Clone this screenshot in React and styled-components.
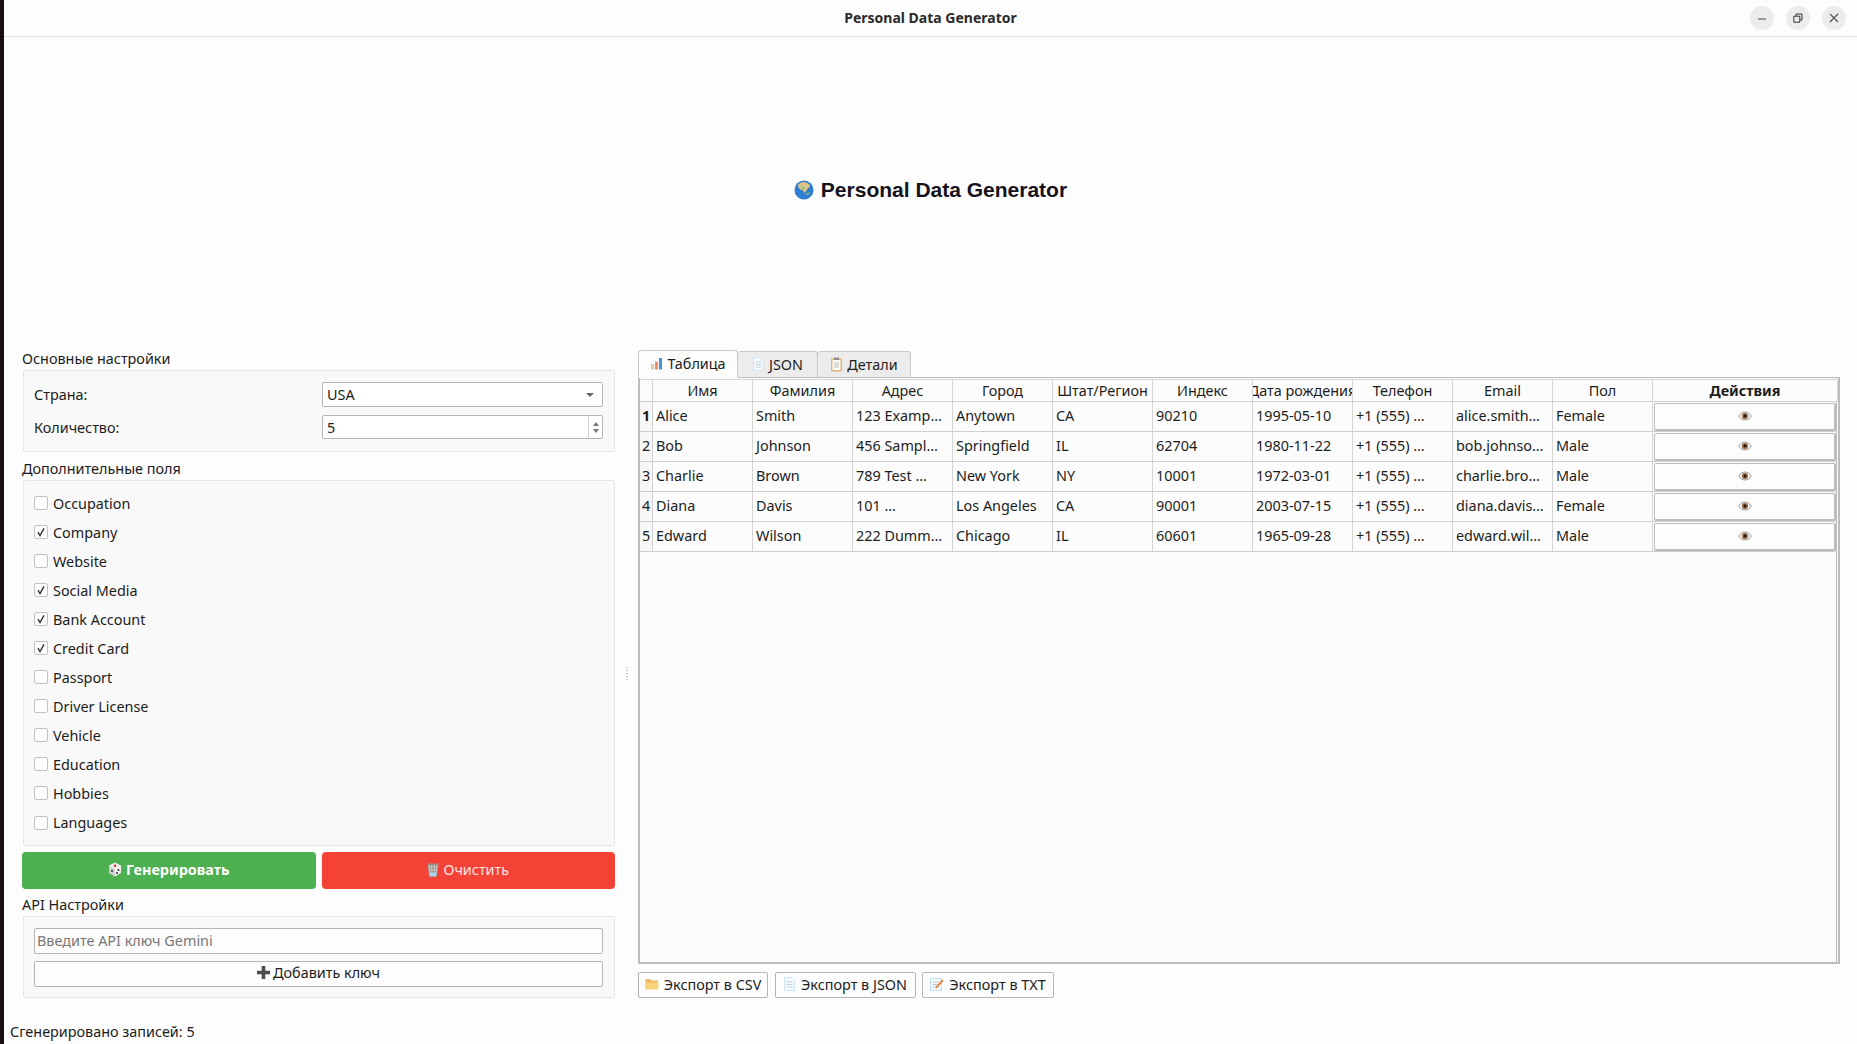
import React from 'react'
import styled, { createGlobalStyle } from 'styled-components'

const GlobalStyle = createGlobalStyle`
html, body { margin: 0; padding: 0; height: 100%; background: #fdfdfd; }
* { box-sizing: border-box; }
body { font-family: "Noto Sans", "Liberation Sans", sans-serif; font-size: 14.4px; color: #1c1c1c; overflow: hidden; }
`

const Window = styled.div`
width: 1857px;
height: 1044px;
display: flex;
flex-direction: column;
border-left: 4px solid #170f14;
background: #fdfdfd;
`
const TitleBar = styled.div`
height: 37px;
flex: none;
display: grid;
grid-template-columns: 1fr auto 1fr;
align-items: center;
background: #fdfdfd;
border-bottom: 1px solid #e2e2e2;
`
const WindowTitle = styled.div`
font-size: 14px;
font-weight: 700;
color: #2a2a2a;
padding-bottom: 2px;
`
const WindowControls = styled.div`
display: flex;
justify-content: flex-end;
gap: 12px;
padding-right: 11px;
`
const ControlButton = styled.div`
width: 24px;
height: 24px;
border-radius: 50%;
background: #ececec;
display: flex;
align-items: center;
justify-content: center;
color: #555;
`
const Heading = styled.h1`
height: 313px;
flex: none;
margin: 0;
display: flex;
align-items: center;
justify-content: center;
gap: 7px;
font-family: "Liberation Sans", Arial, sans-serif;
font-size: 21px;
font-weight: 700;
color: #15121c;
padding-bottom: 8px;
`
const Main = styled.div`
display: flex;
flex: none;
padding-left: 18px;
`
const LeftPanel = styled.div`
width: 593px;
flex: none;
display: flex;
flex-direction: column;
`
const Splitter = styled.div`
width: 23px;
flex: none;
display: flex;
align-items: center;
justify-content: center;
`
const SplitterDots = styled.div`
width: 2px;
height: 16px;
background-image: radial-gradient(circle, #c8c8c8 1px, transparent 1px);
background-size: 2px 3px;
`
const GroupTitle = styled.div`
height: 18px;
line-height: 18px;
margin-top: ${p => p.$top || 0}px;
margin-bottom: 2px;
white-space: nowrap;
`
const GroupBox = styled.div`
margin-left: 1px;
border: 1px solid #e6e6e6;
border-radius: 2px;
background: #f9f9f9;
padding: ${p => p.$padding};
display: flex;
flex-direction: column;
gap: ${p => p.$gap || 0}px;
height: ${p => p.$height}px;
`
const FormRow = styled.div`
display: flex;
align-items: center;
justify-content: space-between;
height: ${p => p.$height}px;
`
const FieldFrame = styled.div`
width: 281px;
height: 100%;
border: 1px solid #b4b4b4;
border-radius: 2px;
background: #fff;
display: flex;
align-items: center;
padding-left: 4px;
`
const ComboArrow = styled.span`
margin-left: auto;
margin-right: 8px;
width: 0;
height: 0;
border-left: 4px solid transparent;
border-right: 4px solid transparent;
border-top: 4px solid #666;
`
const SpinButtons = styled.div`
margin-left: auto;
width: 14px;
height: 100%;
border-left: 1px solid #cfcfcf;
display: flex;
flex-direction: column;
align-items: center;
justify-content: center;
gap: 3px;
`
const SpinUp = styled.span`
width: 0;
height: 0;
border-left: 3.5px solid transparent;
border-right: 3.5px solid transparent;
border-bottom: 4px solid #777;
`
const SpinDown = styled.span`
width: 0;
height: 0;
border-left: 3.5px solid transparent;
border-right: 3.5px solid transparent;
border-top: 4px solid #777;
`
const CheckRow = styled.label`
height: 29.05px;
flex: none;
display: flex;
align-items: center;
gap: 5px;
`
const CheckBox = styled.span`
width: 14px;
height: 14px;
border: 1px solid #c2c2c2;
border-radius: 2px;
background: #fdfdfd;
display: flex;
align-items: center;
justify-content: center;
`
const ActionRow = styled.div`
display: flex;
gap: 6px;
margin-top: 6px;
height: 37px;
`
const ActionButton = styled.div`
flex: 1;
border-radius: 4px;
background: ${p => p.$bg};
color: ${p => p.$color};
font-weight: ${p => p.$bold ? 700 : 400};
padding-bottom: 2px;
display: flex;
align-items: center;
justify-content: center;
gap: 4px;
`
const KeyInput = styled.input`
height: 26px;
flex: none;
width: 100%;
border: 1px solid #b4b4b4;
border-radius: 2px;
background: #fdfdfd;
padding: 0 2px 2px;
font-family: inherit;
font-size: 14.4px;
&::placeholder { color: #777; opacity: 1; }
`
const PlainButton = styled.div`
height: 26px;
flex: none;
border: 1px solid #b4b4b4;
border-radius: 2px;
background: #fdfdfd;
padding-bottom: 2px;
display: flex;
align-items: center;
justify-content: center;
gap: 3px;
white-space: nowrap;
`
const RightPanel = styled.div`
width: 1202px;
flex: none;
display: flex;
flex-direction: column;
margin-top: -1px;
`
const TabBar = styled.div`
height: 28px;
flex: none;
display: flex;
align-items: flex-end;
`
const Tab = styled.div`
height: ${p => p.$active ? 28 : 26}px;
width: ${p => p.$width}px;
border: 1px solid #c8c8c8;
border-bottom: ${p => p.$active ? '1px solid #fdfdfd' : '0'};
border-left: ${p => p.$active ? '1px solid #c8c8c8' : '0'};
border-radius: 3px 3px 0 0;
background: ${p => p.$active ? '#fdfdfd' : '#ececec'};
padding-bottom: 1px;
display: flex;
align-items: center;
justify-content: center;
gap: 4px;
margin-bottom: ${p => p.$active ? -1 : 0}px;
position: relative;
`
const TabPane = styled.div`
height: 587px;
flex: none;
border: 2px solid #bdbdbd;
border-top-width: 1px;
background: #fbfbfb;
padding: 1px 1px 0 0;
`
const TableFrame = styled.div`
height: 100%;
border-top: 1px solid #d6d6d6;
border-right: 1px solid #bdbdbd;
background: #fcfcfc;
`
const GridRow = styled.div`
display: grid;
grid-template-columns: 13px repeat(10, 100px) 185px;
height: ${p => p.$height}px;
border-bottom: 1px solid #cfcfcf;
`
const HeaderCell = styled.div`
display: flex;
align-items: center;
justify-content: center;
overflow: hidden;
white-space: nowrap;
font-weight: ${p => p.$bold ? 700 : 400};
border-right: 1px solid #d6d6d6;
background: #fcfcfc;
`
const RowHead = styled.div`
display: flex;
align-items: center;
justify-content: center;
padding-bottom: 2px;
font-weight: ${p => p.$bold ? 700 : 400};
border-right: 1px solid #cfcfcf;
background: #f7f7f7;
`
const Cell = styled.div`
display: flex;
align-items: center;
padding: 0 0 2px 3px;
overflow: hidden;
white-space: nowrap;
border-right: 1px solid #d6d6d6;
`
const ActionCell = styled.div`
display: flex;
padding: 1px 2px 0 1px;
`
const ViewButton = styled.div`
flex: 1;
border: 1px solid #bdbdbd;
border-bottom-width: 2px;
border-right-width: 2px;
border-radius: 2px;
background: #fdfdfd;
padding-bottom: 2px;
display: flex;
align-items: center;
justify-content: center;
`
const ExportRow = styled.div`
display: flex;
gap: 6.5px;
margin-top: 8px;
`
const ExportButton = styled.div`
height: 26px;
width: ${p => p.$width}px;
border: 1px solid #b4b4b4;
border-radius: 2px;
background: #fdfdfd;
padding-bottom: 2px;
display: flex;
align-items: center;
justify-content: center;
gap: 5px;
white-space: nowrap;
`
const StatusBar = styled.div`
margin-top: 24px;
padding-left: 6px;
height: 20px;
line-height: 20px;
`

const GlobeIcon = () => (
  <svg width="20" height="20" viewBox="0 0 20 20">
    <circle cx="10" cy="10" r="9.5" fill="#2f7fd0" />
    <path d="M4 5c2-2.5 5-3.500 8-2.500 2 .6 3.600 2 4 3.600-.4 1.800-2 2-3 3.400-.5 1.500-1.500 3-2.600 3.300-1-.6-1-2.300-2.400-2.800C6.500 10 4 8 4 5z" fill="#d9c48a" />
    <path d="M8 7c1-.5 2.500-.3 3 .6-.2 1-1.300 1.800-2.300 1.500C8 8.800 7.800 8 8 7z" fill="#8db56b" />
    <path d="M12.500 13c1-.6 2.400-.8 3.300-.4-.4 1.400-1.500 2.400-2.800 2.600-.6-.6-.8-1.400-.5-2.200z" fill="#8db56b" />
  </svg>
)
const ChartIcon = () => (
  <svg width="13" height="13" viewBox="0 0 13 13">
    <rect x="1" y="7" width="3" height="5.500" fill="#e6c9a8" />
    <rect x="5" y="4.500" width="3" height="8" fill="#ef8f6a" />
    <rect x="9" y="1" width="3" height="11.500" fill="#4a90d9" />
  </svg>
)
const DocIcon = () => (
  <svg width="13" height="14" viewBox="0 0 13 14">
    <path d="M1.500.5h7l3 3v10h-10z" fill="#f3f9fd" stroke="#cde4f2" />
    <path d="M3.500 5h6M3.500 7.500h6M3.500 10h6" stroke="#c5d3dc" />
  </svg>
)
const ClipboardIcon = () => (
  <svg width="13" height="15" viewBox="0 0 13 15">
    <rect x="1" y="1.500" width="11" height="13" rx="1" fill="#e8b27a" />
    <rect x="2.500" y="3" width="8" height="10" fill="#fdfdfd" />
    <rect x="4" y="0.500" width="5" height="2.500" fill="#8d8d8d" />
    <path d="M4 6h5M4 8h5M4 10h5" stroke="#bbb" />
  </svg>
)
const DiceIcon = () => (
  <svg width="14" height="15" viewBox="0 0 14 15">
    <path d="M7 .5l6 3v7.500l-6 3.500-6-3.500V3.500z" fill="#f1f1f1" />
    <path d="M7 7.500v7l-6-3.500V3.500z" fill="#cfcfcf" />
    <circle cx="7" cy="3.700" r="1.300" fill="#d8342c" />
    <circle cx="4" cy="9" r="1" fill="#333" />
    <circle cx="10.500" cy="8" r="1" fill="#333" />
    <circle cx="9" cy="11" r="1" fill="#333" />
  </svg>
)
const TrashIcon = () => (
  <svg width="12" height="15" viewBox="0 0 12 15">
    <path d="M.5 1.500h11L10 14.500H2z" fill="#9a8f88" />
    <path d="M2 3l1 9M4.500 3l.4 9M7.500 3l-.4 9M10 3l-1 9M1 5h10M1.500 8h9" stroke="#d7d4d0" strokeWidth=".7" />
    <path d="M2.400 10.500h7.200l-.4 4H2.800z" fill="#a9d3ee" />
  </svg>
)
const PlusIcon = () => (
  <svg width="13" height="13" viewBox="0 0 13 13">
    <path d="M4.700 0h3.600v4.700H13v3.600H8.300V13H4.700V8.300H0V4.700h4.700z" fill="#4d4d4d" />
  </svg>
)
const FolderIcon = () => (
  <svg width="14" height="12" viewBox="0 0 14 12">
    <path d="M.5 2.500c0-.8.5-1.500 1.300-1.500H5l1.200 1.500H13v8.500H.5z" fill="#e8b860" />
    <path d="M.5 4.500h13v7H.5z" fill="#f6d27e" />
  </svg>
)
const MemoIcon = () => (
  <svg width="14" height="14" viewBox="0 0 14 14">
    <rect x="0.500" y="1.500" width="11" height="12" fill="#f3f9fd" stroke="#bfe0f2" />
    <path d="M2.500 5h6M2.500 7.500h5M2.500 10h4" stroke="#b9c8d2" />
    <path d="M6 9.500L12 2.500l1.500 1.300-6 7-2 .7z" fill="#e7843b" />
  </svg>
)
const EyeIcon = () => (
  <svg width="14" height="10" viewBox="0 0 14 10">
    <path d="M.7 5.200C2.400 2.400 4.500 1 7 1s4.600 1.400 6.300 4.200C11.600 7.800 9.500 9 7 9S2.400 7.800.7 5.200z" fill="#f4f4f4" stroke="#8e8e8e" strokeWidth=".9" />
    <circle cx="7" cy="5" r="3.100" fill="#9a6a42" />
    <circle cx="7" cy="5" r="1.400" fill="#16120f" />
  </svg>
)
const CheckMark = () => (
  <svg width="10" height="10" viewBox="0 0 10 10">
    <path d="M2 5.200L4 8.500 8 1.300" fill="none" stroke="#333" strokeWidth="1.400" />
  </svg>
)

const extraFields = [
  ['Occupation', false],
  ['Company', true],
  ['Website', false],
  ['Social Media', true],
  ['Bank Account', true],
  ['Credit Card', true],
  ['Passport', false],
  ['Driver License', false],
  ['Vehicle', false],
  ['Education', false],
  ['Hobbies', false],
  ['Languages', false],
]

const columns = ['Имя', 'Фамилия', 'Адрес', 'Город', 'Штат/Регион', 'Индекс', 'Дата рождения', 'Телефон', 'Email', 'Пол']

const people = [
  ['Alice', 'Smith', '123 Examp…', 'Anytown', 'CA', '90210', '1995-05-10', '+1 (555) …', 'alice.smith…', 'Female'],
  ['Bob', 'Johnson', '456 Sampl…', 'Springfield', 'IL', '62704', '1980-11-22', '+1 (555) …', 'bob.johnso…', 'Male'],
  ['Charlie', 'Brown', '789 Test …', 'New York', 'NY', '10001', '1972-03-01', '+1 (555) …', 'charlie.bro…', 'Male'],
  ['Diana', 'Davis', '101 …', 'Los Angeles', 'CA', '90001', '2003-07-15', '+1 (555) …', 'diana.davis…', 'Female'],
  ['Edward', 'Wilson', '222 Dumm…', 'Chicago', 'IL', '60601', '1965-09-28', '+1 (555) …', 'edward.wil…', 'Male'],
]

const App = () => {
  return (
    <Window>
      <GlobalStyle />
      <TitleBar>
        <div />
        <WindowTitle>Personal Data Generator</WindowTitle>
        <WindowControls>
          <ControlButton>
            <svg width="10" height="10" viewBox="0 0 10 10"><path d="M1 6h8" stroke="#666" strokeWidth="1.200" /></svg>
          </ControlButton>
          <ControlButton>
            <svg width="10" height="10" viewBox="0 0 10 10"><path d="M.8 3.200h6v6h-6zM3 3V1h6v6H7" fill="none" stroke="#333" strokeWidth="1" /></svg>
          </ControlButton>
          <ControlButton>
            <svg width="10" height="10" viewBox="0 0 10 10"><path d="M1 1l8 8M9 1l-8 8" stroke="#555" strokeWidth="1.200" /></svg>
          </ControlButton>
        </WindowControls>
      </TitleBar>

      <Heading><GlobeIcon /> Personal Data Generator</Heading>

      <Main>
        <LeftPanel>
          <GroupTitle>Основные настройки</GroupTitle>
          <GroupBox $padding="11px 11px 0 10px" $gap={8} $height={82}>
            <FormRow $height={25}>
              Страна:
              <FieldFrame>USA<ComboArrow /></FieldFrame>
            </FormRow>
            <FormRow $height={24}>
              Количество:
              <FieldFrame>5<SpinButtons><SpinUp /><SpinDown /></SpinButtons></FieldFrame>
            </FormRow>
          </GroupBox>

          <GroupTitle $top={8}>Дополнительные поля</GroupTitle>
          <GroupBox $padding="7.5px 11px 0 10px" $height={366}>
            {extraFields.map(([name, checked]) => (
              <CheckRow key={name}>
                <CheckBox>{checked && <CheckMark />}</CheckBox>
                {name}
              </CheckRow>
            ))}
          </GroupBox>

          <ActionRow>
            <ActionButton $bg="#4caf50" $color="#fff" $bold><DiceIcon /> Генерировать</ActionButton>
            <ActionButton $bg="#f44336" $color="#fbe4e2"><TrashIcon /> Очистить</ActionButton>
          </ActionRow>

          <GroupTitle $top={7}>API Настройки</GroupTitle>
          <GroupBox $padding="11px 11px 0 10px" $gap={6.5} $height={82}>
            <KeyInput placeholder="Введите API ключ Gemini" readOnly />
            <PlainButton><PlusIcon /> Добавить ключ</PlainButton>
          </GroupBox>
        </LeftPanel>

        <Splitter><SplitterDots /></Splitter>

        <RightPanel>
          <TabBar>
            <Tab $active $width={100}><ChartIcon /> Таблица</Tab>
            <Tab $width={80}><DocIcon /> JSON</Tab>
            <Tab $width={93}><ClipboardIcon /> Детали</Tab>
          </TabBar>
          <TabPane>
            <TableFrame>
              <GridRow $height={22}>
                <HeaderCell />
                {columns.map(name => <HeaderCell key={name}>{name}</HeaderCell>)}
                <HeaderCell $bold>Действия</HeaderCell>
              </GridRow>
              {people.map((person, i) => (
                <GridRow key={person[0]} $height={30}>
                  <RowHead $bold={i === 0}>{i + 1}</RowHead>
                  {person.map((value, j) => <Cell key={j}>{value}</Cell>)}
                  <ActionCell><ViewButton><EyeIcon /></ViewButton></ActionCell>
                </GridRow>
              ))}
            </TableFrame>
          </TabPane>
          <ExportRow>
            <ExportButton $width={130}><FolderIcon /> Экспорт в CSV</ExportButton>
            <ExportButton $width={141}><DocIcon /> Экспорт в JSON</ExportButton>
            <ExportButton $width={132}><MemoIcon /> Экспорт в TXT</ExportButton>
          </ExportRow>
        </RightPanel>
      </Main>

      <StatusBar>Сгенерировано записей: 5</StatusBar>
    </Window>
  )
}

export default App
